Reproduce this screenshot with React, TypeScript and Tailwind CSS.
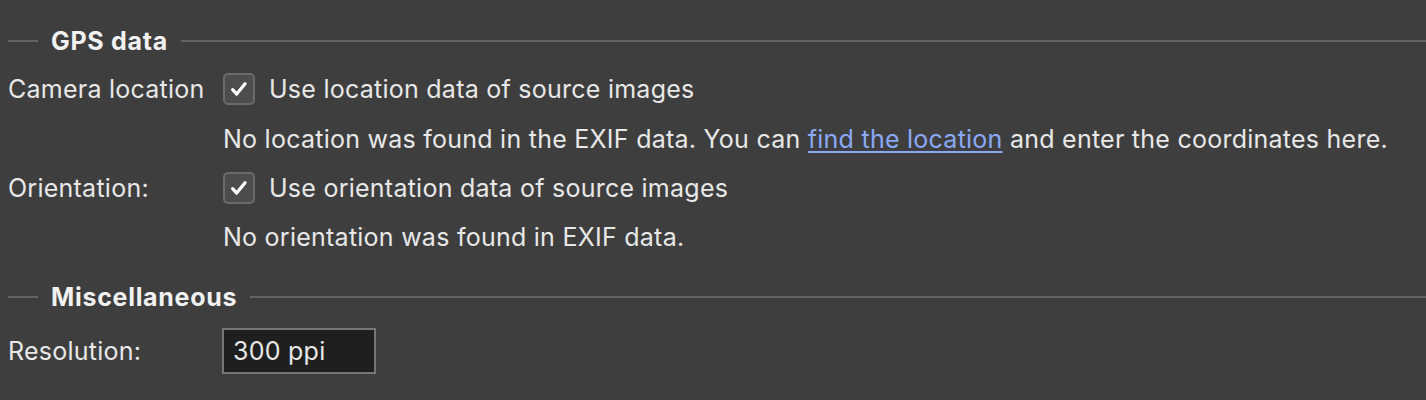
function Check() {
  return (
    <span className="flex h-[32px] w-[32px] flex-none items-center justify-center rounded-[5px] border-2 border-[#6a6a6a] bg-[#4d4d4d]">
      <svg viewBox="0 0 20 20" className="h-[22px] w-[22px]" fill="none" stroke="#ffffff" strokeWidth="2.9" strokeLinecap="round" strokeLinejoin="round" aria-hidden="true">
        <path d="M4.2 10.6l3.7 4 7.6-9.4" />
      </svg>
    </span>
  );
}

function SectionHeader({ title }: { title: string }) {
  return (
    <div className="flex h-[34px] items-center">
      <div className="h-[2px] w-[30px] bg-[#626262]" />
      <span className="mx-[13px] mt-[2px] text-[25px] font-bold tracking-[0.7px] text-[#f2f2f2]">{title}</span>
      <div className="h-[2px] flex-1 bg-[#626262]" />
    </div>
  );
}

export default function App() {
  return (
    <div
      className="h-[400px] w-[1426px] overflow-hidden bg-[#3e3e3e] pl-[8px] pt-[24px] text-[25px] tracking-[0.25px] text-[#e8e8e8]"
      style={{ fontFamily: 'Inter, "Noto Sans", sans-serif' }}
    >
      <SectionHeader title="GPS data" />

      {/* camera location */}
      <div className="mt-[6px] flex h-[50px] items-center">
        <span className="mt-[2px] w-[215px]">Camera location</span>
        <label className="flex items-center gap-[14px]">
          <Check />
          <span className="mt-[2px]">Use location data of source images</span>
        </label>
      </div>
      <div className="flex h-[50px] items-center pl-[215px]">
        <span className="mt-[2px] whitespace-nowrap">
          No location was found in the EXIF data. You can{" "}
          <a href="#" className="text-[#8aa9f5] underline underline-offset-[3px]">find the location</a>{" "}
          and enter the coordinates here.
        </span>
      </div>

      {/* orientation */}
      <div className="flex h-[48px] items-center">
        <span className="mt-[2px] w-[215px]">Orientation:</span>
        <label className="flex items-center gap-[14px]">
          <Check />
          <span className="mt-[2px]">Use orientation data of source images</span>
        </label>
      </div>
      <div className="flex h-[50px] items-center pl-[215px]">
        <span className="mt-[2px]">No orientation was found in EXIF data.</span>
      </div>

      <div className="mt-[18px]">
        <SectionHeader title="Miscellaneous" />
      </div>

      <div className="mt-[14px] flex h-[46px] items-center">
        <span className="mt-[2px] w-[214px]">Resolution:</span>
        <div className="flex h-[46px] w-[154px] items-center border-2 border-[#767676] bg-[#1f1f1f] pl-[9px] pt-[2px]">
          300 ppi
        </div>
      </div>
    </div>
  );
}
